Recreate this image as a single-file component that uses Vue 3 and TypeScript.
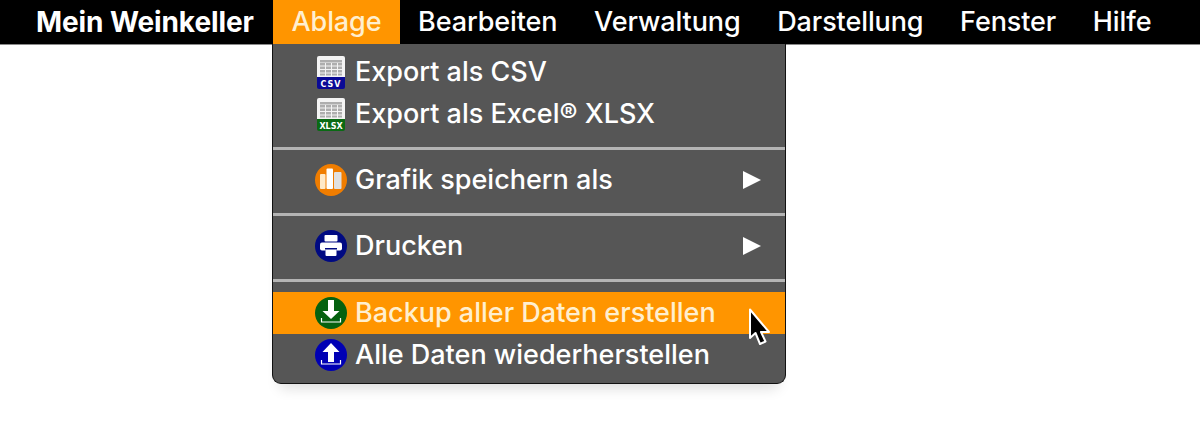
<script setup lang="ts">
type Row = { label: string; icon: string; submenu?: boolean; active?: boolean };
const bar: string[] = ['Ablage', 'Bearbeiten', 'Verwaltung', 'Darstellung', 'Fenster', 'Hilfe'];
const groups: Row[][] = [
  [
    { label: 'Export als CSV', icon: 'csv' },
    { label: 'Export als Excel® XLSX', icon: 'xlsx' },
  ],
  [{ label: 'Grafik speichern als', icon: 'chart', submenu: true }],
  [{ label: 'Drucken', icon: 'print', submenu: true }],
  [
    { label: 'Backup aller Daten erstellen', icon: 'down', active: true },
    { label: 'Alle Daten wiederherstellen', icon: 'up' },
  ],
];
</script>

<template>
  <div class="page">
    <nav class="bar">
      <span class="brand">Mein Weinkeller</span>
      <span v-for="(b, i) in bar" :key="b" class="bar-item" :class="{ open: i === 0 }">{{ b }}</span>
    </nav>
    <div class="menu">
      <template v-for="(g, gi) in groups" :key="gi">
        <div v-if="gi > 0" class="sep" :class="{ final: gi === groups.length - 1 }"></div>
        <div v-for="r in g" :key="r.label" class="row" :class="{ active: r.active }">
          <span class="icon">
            <svg v-if="r.icon === 'csv' || r.icon === 'xlsx'" width="30" height="34" viewBox="0 0 30 34">
              <path d="M3 1h24a2 2 0 0 1 2 2v20H1V3a2 2 0 0 1 2-2z" fill="#f4f4f4" />
              <g fill="#aeaeae">
                <rect x="4" y="5" width="22" height="2.500" />
                <rect x="4" y="8" width="5" height="2.500" /><rect x="10" y="8" width="5" height="2.500" /><rect x="16" y="8" width="5" height="2.500" /><rect x="22" y="8" width="4" height="2.500" />
                <rect x="4" y="11.500" width="5" height="2.500" /><rect x="10" y="11.500" width="5" height="2.500" /><rect x="16" y="11.500" width="5" height="2.500" /><rect x="22" y="11.500" width="4" height="2.500" />
                <rect x="4" y="15" width="5" height="2.500" /><rect x="10" y="15" width="5" height="2.500" /><rect x="16" y="15" width="5" height="2.500" /><rect x="22" y="15" width="4" height="2.500" />
                <rect x="4" y="18.500" width="5" height="2" /><rect x="10" y="18.500" width="5" height="2" /><rect x="16" y="18.500" width="5" height="2" /><rect x="22" y="18.500" width="4" height="2" />
              </g>
              <path d="M1 22h28v10a2 2 0 0 1-2 2H3a2 2 0 0 1-2-2z" :fill="r.icon === 'csv' ? '#0a0a96' : '#0a6a14'" />
              <text x="15" y="31.5" text-anchor="middle" class="tag" :class="{ wide: r.icon === 'csv' }">{{ r.icon.toUpperCase() }}</text>
            </svg>
            <svg v-else width="32" height="32" viewBox="0 0 32 32">
              <template v-if="r.icon === 'chart'">
                <circle cx="16" cy="16" r="16" fill="#f07d00" />
                <rect x="5" y="10" width="5.500" height="15" rx="1" fill="#ffe9c8" />
                <rect x="11.500" y="4.500" width="6.500" height="20.500" rx="1" fill="#fff" />
                <rect x="19" y="8" width="7.500" height="17" rx="1" fill="#e0e0e0" />
              </template>
              <template v-else-if="r.icon === 'print'">
                <circle cx="16" cy="16" r="16" fill="#000a82" />
                <rect x="9.500" y="5" width="13" height="6.500" rx="1" fill="#fff" />
                <rect x="5" y="12.500" width="22" height="8" rx="2" fill="#fff" />
                <rect x="10" y="18" width="12" height="1.500" fill="#000a82" />
                <rect x="10.500" y="20" width="11" height="6" rx="1" fill="#fff" />
              </template>
              <template v-else-if="r.icon === 'down'">
                <circle cx="16" cy="16" r="16" fill="#05610f" />
                <path d="M13 3h6v11h5.500L16 22 7.500 14H13z" fill="#fff" />
                <path d="M6.500 21v4h19v-4" fill="none" stroke="#fff" stroke-width="1.200" />
              </template>
              <template v-else>
                <circle cx="16" cy="16" r="16" fill="#0000b4" />
                <path d="M13 23h6V13h5.500L16 4 7.500 13H13z" fill="#fff" />
                <path d="M6.500 21v4h19v-4" fill="none" stroke="#fff" stroke-width="1.200" />
              </template>
            </svg>
          </span>
          <span class="label">{{ r.label }}</span>
          <span v-if="r.submenu" class="arrow"></span>
        </div>
      </template>
    </div>
    <svg class="cursor" width="30" height="44" viewBox="0 0 30 44">
      <path d="M4 3.500V32l5.500-5 4.500 11 5.500-2.500-4.500-9.500H23z" fill="#000" stroke="#fff" stroke-width="2" stroke-linejoin="round" />
    </svg>
  </div>
</template>

<style scoped>
.page {
  position: relative;
  width: 1200px;
  height: 444px;
  background: #fff;
  overflow: hidden;
  font-family: Inter, "Liberation Sans", sans-serif;
  color: #fff;
}
.bar {
  display: flex;
  height: 44px;
  padding-left: 36px;
  background: #000;
  border-bottom: 1px solid #8a8a8a;
  font-size: 27px;
  letter-spacing: -0.100px;
  line-height: 44px;
  font-weight: 500;
}
.brand {
  font-weight: 700;
  font-size: 28px;
  width: 237px;
}
.bar-item {
  padding: 0 18.300px;
}
.bar-item.open {
  padding-left: 18.500px;
  background: #ff9500;
  color: #ffefcf;
}
.menu {
  position: absolute;
  left: 272px;
  top: 44px;
  width: 512px;
  padding: 7px 0;
  background: #565656;
  border: 1px solid #111;
  border-top: none;
  border-radius: 0 0 9px 9px;
  box-shadow: 0 12px 14px -8px rgba(0, 0, 0, 0.14);
  font-size: 27px;
  font-weight: 500;
}
.row {
  display: flex;
  align-items: center;
  height: 42px;
  padding-left: 42px;
  position: relative;
}
.row.active {
  background: #ff9500;
  color: #ffefcf;
}
.icon {
  display: flex;
  justify-content: center;
  width: 32px;
  margin-right: 8px;
}
.label {
  margin-bottom: 2px;
}
.tag {
  font-family: "DejaVu Sans", sans-serif;
  font-size: 8px;
  font-weight: 700;
  fill: #fff;
}
.tag.wide {
  letter-spacing: 1px;
}
.arrow {
  position: absolute;
  right: 24px;
  top: 12px;
  border-left: 18px solid #fff;
  border-top: 9px solid transparent;
  border-bottom: 9px solid transparent;
}
.sep {
  height: 3px;
  margin: 12px 0 9px;
  background: #b4b4b4;
}
.sep.final {
  margin-bottom: 10px;
}
.cursor {
  position: absolute;
  left: 746px;
  top: 306px;
}
</style>
